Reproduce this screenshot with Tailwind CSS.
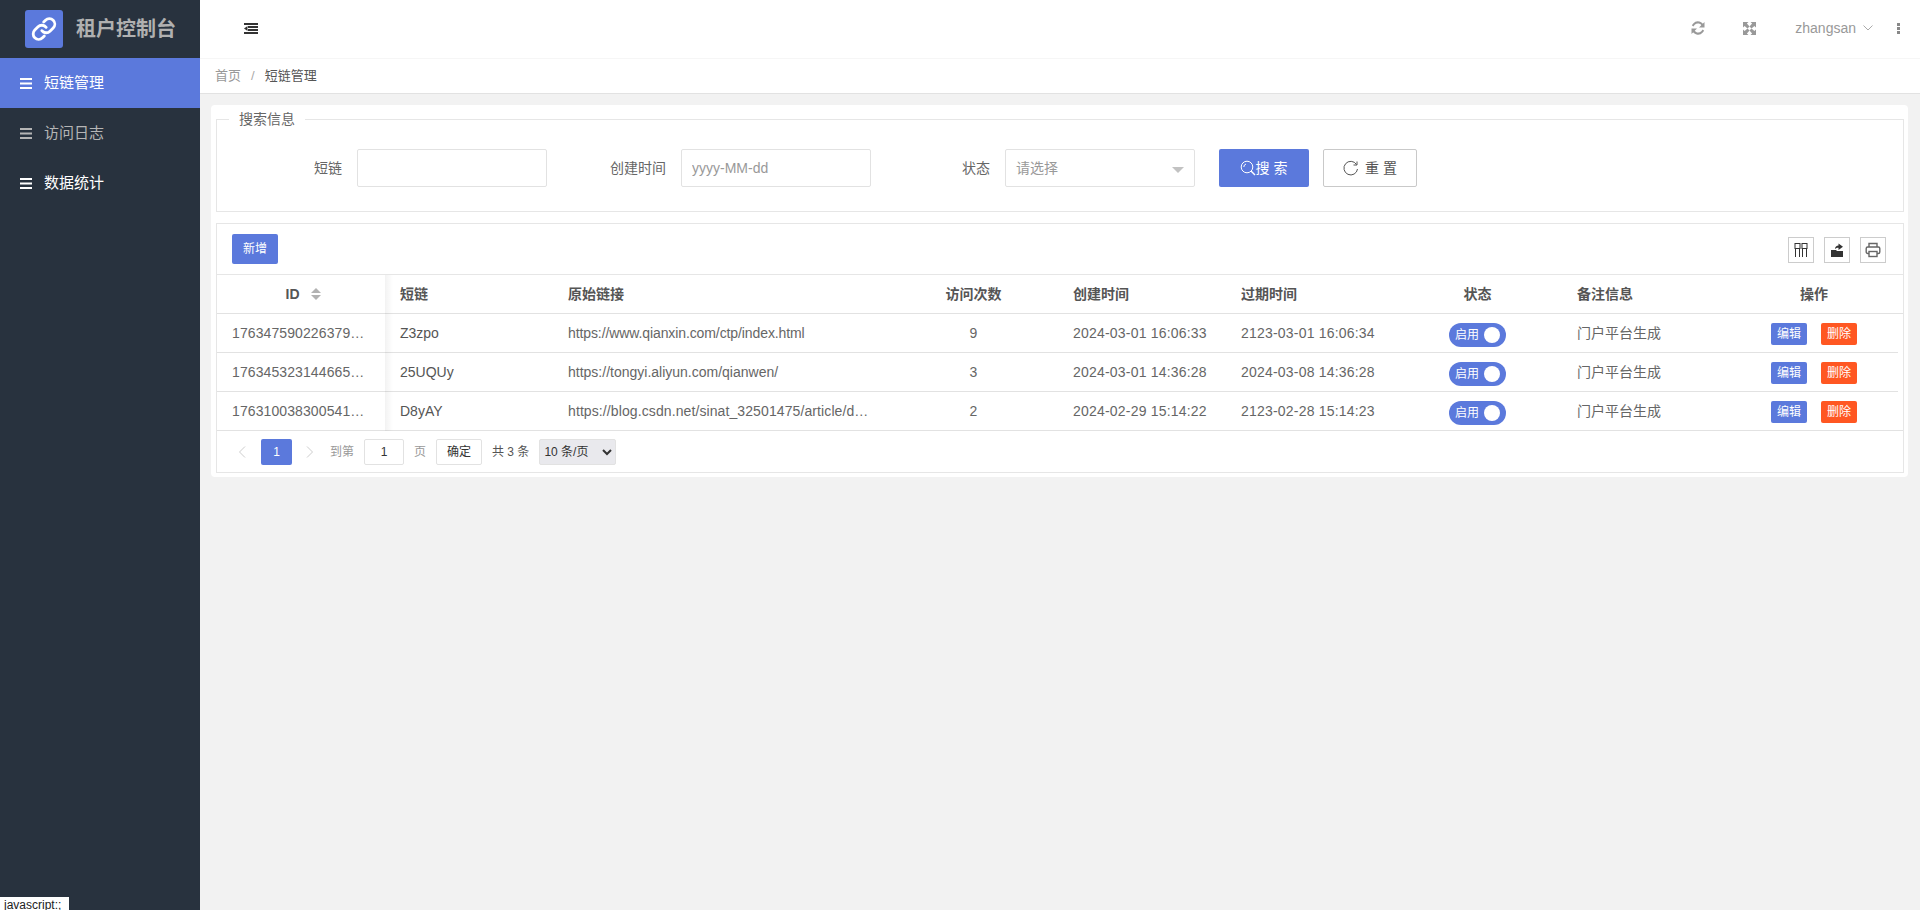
<!DOCTYPE html>
<html lang="zh-CN">
<head>
    <meta charset="UTF-8">
    <title>租户控制台</title>
    <script src="https://cdn.jsdelivr.net/npm/@tailwindcss/browser@4"></script>
</head>
<body class="bg-[#f2f2f2] font-['Liberation_Sans','Noto_Sans_CJK_SC',sans-serif] text-sm text-[#666]">
<div class="relative flex h-[910px] w-[1920px] overflow-hidden">

    <!-- Sidebar -->
    <aside class="w-[200px] shrink-0 bg-[#28323e]">
        <div class="flex h-[58px] items-center pl-[25px]">
            <div class="flex h-[38px] w-[38px] items-center justify-center rounded-[3px] bg-[#5b79dc]">
                <svg class="h-[26px] w-[26px]" viewBox="0 0 24 24" fill="none" stroke="#fff" stroke-width="2.6" stroke-linecap="round" stroke-linejoin="round">
                    <path d="M10 13.5a5 5 0 0 0 7.5.5l3-3a5 5 0 0 0-7.1-7.1l-1.7 1.7"/>
                    <path d="M14 10.5a5 5 0 0 0-7.5-.5l-3 3a5 5 0 0 0 7.1 7.1l1.7-1.7"/>
                </svg>
            </div>
            <span class="ml-[13px] text-xl font-bold text-[#b0b0b0]">租户控制台</span>
        </div>
        <nav>
            <a href="#" class="flex h-[50px] items-center gap-3 bg-[#5b79dc] pl-5 text-[15px] text-white">
                <svg class="h-[11px] w-3" viewBox="0 0 12 11" fill="currentColor"><rect width="12" height="2"/><rect y="4.5" width="12" height="2"/><rect y="9" width="12" height="2"/></svg>
                短链管理
            </a>
            <a href="#" class="flex h-[50px] items-center gap-3 pl-5 text-[15px] text-[#b5b5b5]">
                <svg class="h-[11px] w-3" viewBox="0 0 12 11" fill="currentColor"><rect width="12" height="2"/><rect y="4.5" width="12" height="2"/><rect y="9" width="12" height="2"/></svg>
                访问日志
            </a>
            <a href="#" class="flex h-[50px] items-center gap-3 pl-5 text-[15px] text-white">
                <svg class="h-[11px] w-3" viewBox="0 0 12 11" fill="currentColor"><rect width="12" height="2"/><rect y="4.5" width="12" height="2"/><rect y="9" width="12" height="2"/></svg>
                数据统计
            </a>
        </nav>
    </aside>

    <div class="min-w-0 flex-1">
        <!-- Top bar -->
        <header class="flex h-[59px] items-center border-b border-[#f6f6f6] bg-white pb-[2px] text-[#999]">
            <svg class="ml-[44px] h-[11px] w-[14px]" viewBox="0 0 14 11" fill="#333"><rect width="14" height="2"/><rect x="4" y="3" width="10" height="2"/><rect x="4" y="6" width="10" height="2"/><rect y="9" width="14" height="2"/><path d="M3.5 3v5L0 5.5z"/></svg>
            <svg class="ml-auto h-[14px] w-[14px]" viewBox="0 0 14 14" fill="none" stroke="#999" stroke-width="2">
                <path d="M12 5.5A5.2 5.2 0 0 0 3 3.2L1.6 4.8"/>
                <path d="M2 8.5a5.2 5.2 0 0 0 9 2.3l1.4-1.6"/>
                <path d="M13.500 1v5.500H8z" fill="#999" stroke="none"/>
                <path d="M.5 13V7.500H6z" fill="#999" stroke="none"/>
            </svg>
            <svg class="ml-[38px] h-[13px] w-[13px]" viewBox="0 0 13 13" fill="#999">
                <path d="M0 0h5.500L3.900 1.600 6.500 4.500 4.500 6.500 1.600 3.900 0 5.500z"/>
                <path d="M13 0v5.500l-1.600-1.600-2.900 2.600-2-2 2.600-2.900L7.500 0z"/>
                <path d="M0 13V7.500l1.600 1.600 2.900-2.600 2 2-2.600 2.900L5.500 13z"/>
                <path d="M13 13H7.500l1.600-1.600-2.600-2.900 2-2 2.900 2.600L13 7.500z"/>
            </svg>
            <span class="ml-[39px] text-[#999]">zhangsan</span>
            <svg class="ml-[7px] h-[6px] w-[10px]" viewBox="0 0 10 6" fill="none" stroke="#aaa"><path d="M.5.5 5 5 9.500.5"/></svg>
            <div class="ml-[24px] mr-[20px] flex flex-col gap-[1px]">
                <span class="h-[3px] w-[3px] bg-[#888]"></span>
                <span class="h-[3px] w-[3px] bg-[#888]"></span>
                <span class="h-[3px] w-[3px] bg-[#888]"></span>
            </div>
        </header>

        <!-- Breadcrumb -->
        <div class="flex h-[35px] items-center border-b border-[#e2e2e2] bg-white pl-[15px] text-[13px]">
            <span class="text-[#999]">首页</span>
            <span class="mx-[10px] text-[#aaa]">/</span>
            <span class="text-[#555]">短链管理</span>
        </div>

        <main class="pl-[11px] pr-3 pt-[11px]">
            <div class="rounded-[4px] bg-white py-1 pl-[5px] pr-1">
                <!-- Search form -->
                <fieldset class="border border-[#e6e6e6] pb-[24px]">
                    <legend class="ml-3 h-5 px-[10px] leading-5 text-[#666]">搜索信息</legend>
                    <form class="mt-5 flex items-center pl-[15px]">
                        <label class="w-[110px] text-right">短链</label>
                        <input type="text" class="ml-[15px] h-[38px] w-[190px] rounded-[2px] border border-[#e2e2e2] px-[10px]">
                        <label class="w-[119px] text-right">创建时间</label>
                        <input type="text" placeholder="yyyy-MM-dd" class="ml-[15px] h-[38px] w-[190px] rounded-[2px] border border-[#e2e2e2] px-[10px] placeholder:text-[#999]">
                        <label class="w-[119px] text-right">状态</label>
                        <div class="relative ml-[15px] flex h-[38px] w-[190px] items-center rounded-[2px] border border-[#e2e2e2] px-[10px] text-[#999]">
                            请选择
                            <span class="absolute right-[10px] top-[17px] border-x-[6px] border-t-[6px] border-x-transparent border-t-[#c2c2c2]"></span>
                        </div>
                        <button type="button" class="ml-6 flex h-[38px] w-[90px] items-center justify-center rounded-[2px] bg-[#5b79dc] pl-[3px] text-white">
                            <svg class="h-4 w-4" viewBox="0 0 16 16" fill="none" stroke="#fff" stroke-width="1"><circle cx="7" cy="7" r="5.800"/><path d="M11 11l4 4" stroke-width="1.500"/><path d="M3.800 7A3.200 3.200 0 0 1 6 4"/></svg>
                            <span class="tracking-[4px]">搜索</span>
                        </button>
                        <button type="button" class="ml-[14px] flex h-[38px] w-[94px] items-center justify-center rounded-[2px] border border-[#c9c9c9] bg-white pl-1 text-[#555]">
                            <svg class="mr-[6px] h-4 w-4" viewBox="0 0 16 16" fill="none" stroke="#555" stroke-width="1"><path d="M13.500 4.500A6.800 6.800 0 1 0 14.500 9"/><path d="M14 1.500v3.500h-3.500" /></svg>
                            <span class="tracking-[4px]">重置</span>
                        </button>
                    </form>
                </fieldset>

                <!-- Table box -->
                <div class="relative mt-[11px] border border-[#e6e6e6]">
                    <div class="flex h-[51px] items-start border-b border-[#e6e6e6]">
                        <button type="button" class="ml-[15px] mt-[10px] h-[30px] w-[46px] rounded-[2px] bg-[#5b79dc] text-xs text-white">新增</button>
                        <div class="ml-auto mr-[17px] mt-[13px] flex gap-[10px]">
                            <button type="button" class="flex h-[26px] w-[26px] items-center justify-center border border-[#ccc]">
                                <svg class="h-4 w-4" viewBox="0 0 16 16" fill="none" stroke="#333"><rect x="2" y="1.500" width="5" height="5"/><rect x="9" y="1.500" width="5" height="5"/><path d="M2.500 7v8M6.500 7v8M9.500 7v8M13.500 7v8"/></svg>
                            </button>
                            <button type="button" class="flex h-[26px] w-[26px] items-center justify-center border border-[#ccc]">
                                <svg class="h-4 w-4" viewBox="0 0 16 16" fill="#333"><path d="M2 8h5l1 1h6v6H2z"/><path d="M6 7c0-2 1.500-3.500 3.500-3.500V1.500L14 4.800 9.500 8V5.800C8 5.800 7 6.300 6 7z"/></svg>
                            </button>
                            <button type="button" class="flex h-[26px] w-[26px] items-center justify-center border border-[#ccc]">
                                <svg class="h-4 w-4" viewBox="0 0 16 16" fill="none" stroke="#666" stroke-width="1.400"><path d="M4 5V1.500h8V5"/><rect x="1.200" y="5" width="13.600" height="6.500" rx="1.500"/><rect x="4" y="9.500" width="8" height="5" fill="#fff"/></svg>
                            </button>
                        </div>
                    </div>

                    <table class="w-[1686px] table-fixed">
                        <colgroup>
                            <col class="w-[168px]"><col class="w-[168px]"><col class="w-[336px]"><col class="w-[169px]"><col class="w-[168px]"><col class="w-[167px]"><col class="w-[169px]"><col class="w-[168px]"><col class="w-[168px]"><col class="w-[5px]">
                        </colgroup>
                        <thead class="text-[#555]">
                            <tr class="h-[38px] border-b border-[#e2e2e2]">
                                <th class="pl-1 font-bold">
                                    <span class="inline-flex items-center justify-center gap-[11px]">ID
                                        <span class="flex flex-col gap-[2px]">
                                            <span class="border-x-[5px] border-b-[5px] border-x-transparent border-b-[#b2b2b2]"></span>
                                            <span class="border-x-[5px] border-t-[5px] border-x-transparent border-t-[#b2b2b2]"></span>
                                        </span>
                                    </span>
                                </th>
                                <th class="px-[15px] text-left font-bold">短链</th>
                                <th class="px-[15px] text-left font-bold">原始链接</th>
                                <th class="font-bold">访问次数</th>
                                <th class="px-[15px] text-left font-bold">创建时间</th>
                                <th class="px-[15px] text-left font-bold">过期时间</th>
                                <th class="font-bold">状态</th>
                                <th class="px-[15px] text-left font-bold">备注信息</th>
                                <th class="font-bold">操作</th>
                                <th></th>
                            </tr>
                        </thead>
                        <tbody class="[&_td]:pt-[1px]">
                            <tr class="h-[39px]">
                                <td class="truncate border-b border-[#e2e2e2] px-[15px] tracking-[0.1px]">176347590226379…</td>
                                <td class="border-b border-[#e2e2e2] px-[15px] text-[#555]">Z3zpo</td>
                                <td class="truncate border-b border-[#e2e2e2] px-[15px] tracking-[-0.1px]">https://www.qianxin.com/ctp/index.html</td>
                                <td class="border-b border-[#e2e2e2] text-center">9</td>
                                <td class="border-b border-[#e2e2e2] px-[15px] tracking-[0.2px]">2024-03-01 16:06:33</td>
                                <td class="border-b border-[#e2e2e2] px-[15px] tracking-[0.2px]">2123-03-01 16:06:34</td>
                                <td class="border-b border-[#e2e2e2]">
                                    <div class="mx-auto mt-1 flex h-6 w-[57px] items-center justify-between rounded-full bg-[#5b79dc] pl-[6px] pr-[6px] text-xs text-white">启用<span class="h-4 w-4 rounded-full bg-white"></span></div>
                                </td>
                                <td class="border-b border-[#e2e2e2] px-[15px]">门户平台生成</td>
                                <td class="border-b border-[#e2e2e2]">
                                    <div class="mt-[2px] flex justify-center gap-[14px] text-xs text-white"><button type="button" class="h-[22px] w-9 rounded-[2px] bg-[#5b79dc]">编辑</button><button type="button" class="h-[22px] w-9 rounded-[2px] bg-[#ff5722]">删除</button></div>
                                </td>
                                <td></td>
                            </tr>
                            <tr class="h-[39px]">
                                <td class="truncate border-b border-[#e2e2e2] px-[15px] tracking-[0.1px]">176345323144665…</td>
                                <td class="border-b border-[#e2e2e2] px-[15px] text-[#555]">25UQUy</td>
                                <td class="truncate border-b border-[#e2e2e2] px-[15px]">https://tongyi.aliyun.com/qianwen/</td>
                                <td class="border-b border-[#e2e2e2] text-center">3</td>
                                <td class="border-b border-[#e2e2e2] px-[15px] tracking-[0.2px]">2024-03-01 14:36:28</td>
                                <td class="border-b border-[#e2e2e2] px-[15px] tracking-[0.2px]">2024-03-08 14:36:28</td>
                                <td class="border-b border-[#e2e2e2]">
                                    <div class="mx-auto mt-1 flex h-6 w-[57px] items-center justify-between rounded-full bg-[#5b79dc] pl-[6px] pr-[6px] text-xs text-white">启用<span class="h-4 w-4 rounded-full bg-white"></span></div>
                                </td>
                                <td class="border-b border-[#e2e2e2] px-[15px]">门户平台生成</td>
                                <td class="border-b border-[#e2e2e2]">
                                    <div class="mt-[2px] flex justify-center gap-[14px] text-xs text-white"><button type="button" class="h-[22px] w-9 rounded-[2px] bg-[#5b79dc]">编辑</button><button type="button" class="h-[22px] w-9 rounded-[2px] bg-[#ff5722]">删除</button></div>
                                </td>
                                <td></td>
                            </tr>
                            <tr class="h-[39px]">
                                <td class="truncate px-[15px] tracking-[0.1px]">176310038300541…</td>
                                <td class="px-[15px] text-[#555]">D8yAY</td>
                                <td class="truncate px-[15px] tracking-[0.1px]">https://blog.csdn.net/sinat_32501475/article/d…</td>
                                <td class="text-center">2</td>
                                <td class="px-[15px] tracking-[0.2px]">2024-02-29 15:14:22</td>
                                <td class="px-[15px] tracking-[0.2px]">2123-02-28 15:14:23</td>
                                <td>
                                    <div class="mx-auto mt-1 flex h-6 w-[57px] items-center justify-between rounded-full bg-[#5b79dc] pl-[6px] pr-[6px] text-xs text-white">启用<span class="h-4 w-4 rounded-full bg-white"></span></div>
                                </td>
                                <td class="px-[15px]">门户平台生成</td>
                                <td>
                                    <div class="mt-[2px] flex justify-center gap-[14px] text-xs text-white"><button type="button" class="h-[22px] w-9 rounded-[2px] bg-[#5b79dc]">编辑</button><button type="button" class="h-[22px] w-9 rounded-[2px] bg-[#ff5722]">删除</button></div>
                                </td>
                                <td></td>
                            </tr>
                        </tbody>
                    </table>

                    <!-- Fixed column shadow -->
                    <div class="pointer-events-none absolute left-[168px] top-[51px] h-[156px] w-2 bg-gradient-to-r from-black/5 to-transparent"></div>

                    <!-- Pagination -->
                    <div class="flex h-[42px] items-center border-t border-[#e2e2e2] pl-[21px] pt-[1px] text-xs">
                        <svg class="h-3 w-2" viewBox="0 0 8 12" fill="none" stroke="#ccc"><path d="M7 .5 1.500 6 7 11.500"/></svg>
                        <span class="ml-[15px] flex h-[26px] w-[31px] items-center justify-center rounded-[2px] bg-[#5b79dc] text-white">1</span>
                        <svg class="ml-[14px] h-3 w-2" viewBox="0 0 8 12" fill="none" stroke="#ccc"><path d="M1 .5 6.500 6 1 11.500"/></svg>
                        <span class="ml-[16px] text-[#999]">到第</span>
                        <input type="text" value="1" class="ml-[10px] h-[26px] w-[40px] rounded-[2px] border border-[#e2e2e2] text-center text-[#333]">
                        <span class="ml-[10px] text-[#999]">页</span>
                        <button type="button" class="ml-[10px] h-[26px] w-[46px] rounded-[2px] border border-[#e2e2e2] text-[#333]">确定</button>
                        <span class="ml-[10px] text-[#555]">共 3 条</span>
                        <select class="ml-[10px] h-[26px] w-[77px] rounded-[2px] border border-[#e2e2e2] bg-[#e9e9ed] text-[#333]"><option>10 条/页</option></select>
                    </div>
                </div>
            </div>
        </main>
    </div>

    <!-- Browser status link -->
    <div class="absolute bottom-0 left-0 h-[13px] w-[69px] overflow-hidden bg-white pl-1 text-xs leading-[16px] text-[#222]">javascript:;</div>
</div>
</body>
</html>
